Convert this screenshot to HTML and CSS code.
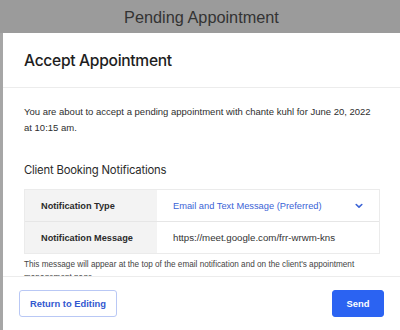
FILE: index.html
```html
<!DOCTYPE html>
<html>
<head>
<meta charset="utf-8">
<link rel="stylesheet" href="styles.css">
</head>
<body>
<div class="page">
  <div class="topbar">Pending Appointment</div>
  <div class="stage">
    <div class="underlay"></div>
    <div class="modal">
      <div class="modal-header">Accept Appointment</div>
      <div class="modal-body">
        <p class="intro">You are about to accept a pending appointment with chante kuhl for June 20, 2022 at 10:15 am.</p>
        <h2 class="section-title">Client Booking Notifications</h2>
        <div class="table">
          <div class="row">
            <div class="label">Notification Type</div>
            <div class="value select">
              <span>Email and Text Message (Preferred)</span>
              <svg class="chev" width="8" height="6" viewBox="0 0 8 6"><path d="M1.2 1.5 L4 4.2 L6.8 1.5" fill="none" stroke="#3b63d6" stroke-width="1.6" stroke-linecap="round" stroke-linejoin="round"/></svg>
            </div>
          </div>
          <div class="row">
            <div class="label">Notification Message</div>
            <div class="value">https://meet.google.com/frr-wrwm-kns</div>
          </div>
        </div>
        <p class="note">This message will appear at the top of the email notification and on the client's appointment management page.</p>
      </div>
      <div class="modal-footer">
        <button class="btn btn-outline">Return to Editing</button>
        <button class="btn btn-primary">Send</button>
      </div>
    </div>
  </div>
</div>
</body>
</html>
```
FILE: styles.css
```css
* { box-sizing: border-box; }
html, body { margin: 0; padding: 0; }
body {
  width: 400px;
  height: 330px;
  overflow: hidden;
  background: #9b9b9b;
  font-family: "Liberation Sans", Arial, sans-serif;
  color: #2b2b2b;
}
.page { display: flex; flex-direction: column; height: 330px; }
.topbar {
  height: 33px;
  display: flex;
  align-items: center;
  justify-content: center;
  font-size: 16.3px;
  color: #333;
  padding-left: 3px;
  padding-top: 2px;
}
.stage { flex: 1; display: flex; min-height: 0; }
.underlay { width: 3px; flex-shrink: 0; background: #a6a6a6; }
.modal {
  width: 410px;
  flex-shrink: 0;
  background: #fff;
  display: flex;
  flex-direction: column;
  min-height: 0;
}
.modal-header {
  height: 55px;
  flex-shrink: 0;
  padding-left: 21px;
  padding-top: 1px;
  display: flex;
  align-items: center;
  font-family: Inter, "Liberation Sans", sans-serif;
  font-size: 15.6px;
  font-weight: 500;
  color: #1e1e1e;
  border-bottom: 1px solid #ececec;
  letter-spacing: -0.3px;
}
.modal-body {
  flex: 1;
  min-height: 0;
  overflow: hidden;
  padding: 16px 0 0 21px;
  width: 377px;
}
.intro {
  margin: 0;
  font-size: 9.5px;
  line-height: 16px;
  color: #2e2e2e;
}
.section-title {
  margin: 25px 0 0;
  font-family: Inter, "Liberation Sans", sans-serif;
  font-size: 11.3px;
  font-weight: 400;
  color: #2b2b2b;
  line-height: 18px;
  letter-spacing: -0.2px;
}
.table {
  margin-top: 10px;
  border: 1px solid #ebebeb;
  width: 356px;
}
.row { display: flex; height: 31px; }
.row + .row { border-top: 1px solid #e6e6e6; height: 32px; }
.label {
  width: 132px;
  background: #f3f3f3;
  padding-left: 16px;
  display: flex;
  align-items: center;
  font-size: 9.2px;
  font-weight: 700;
  color: #2b2b2b;
  white-space: nowrap;
}
.value {
  flex: 1;
  padding-left: 16px;
  display: flex;
  align-items: center;
  font-size: 9.7px;
  color: #333;
  white-space: nowrap;
}
.select { color: #3b63d6; font-size: 9.3px; justify-content: space-between; padding-right: 16px; }
.note {
  margin: 4px 0 0;
  font-size: 8.2px;
  line-height: 13px;
  color: #444;
}
.modal-footer {
  height: 54px;
  flex-shrink: 0;
  border-top: 1px solid #ececec;
  display: flex;
  align-items: center;
  padding: 0 16px 0 16px;
  width: 397px;
  justify-content: space-between;
}
.btn {
  height: 27px;
  font-family: "Liberation Sans", Arial, sans-serif;
  font-size: 9.4px;
  font-weight: 700;
  border-radius: 3px;
  cursor: pointer;
  white-space: nowrap;
  padding: 0;
}
.btn-outline {
  width: 98px;
  background: #fff;
  border: 1px solid #b9c8f5;
  color: #3258d0;
}
.btn-primary {
  width: 52px;
  background: #2b63f2;
  border: 1px solid #2b63f2;
  color: #fff;
}
```
